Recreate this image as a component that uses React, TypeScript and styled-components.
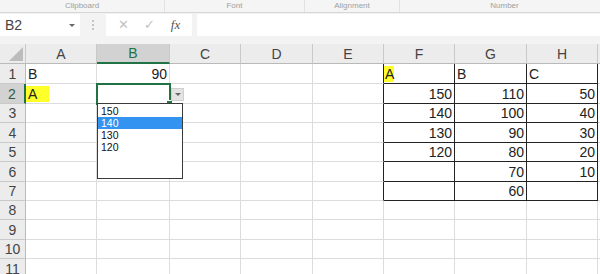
import styled, { createGlobalStyle } from 'styled-components';

const GlobalStyle = createGlobalStyle`
  html, body {
    margin: 0;
    padding: 0;
    overflow: hidden;
    background: #f3f3f3;
    font-family: 'Liberation Sans', Arial, sans-serif;
  }
`;

const colors = {
  grid: '#dcdcdc',
  headerBg: '#ececec',
  headerLine: '#c9c9c9',
  headerSel: '#d2d2d2',
  green: '#217346',
  text: '#222',
  black: '#222'
};

const COL_WIDTHS = [71, 73, 71, 72, 71, 71, 72, 71];
const COL_NAMES = ['A', 'B', 'C', 'D', 'E', 'F', 'G', 'H'];
const ROW_HEIGHTS = [20, 20, 19, 20, 19, 20, 19, 19, 20, 19, 20];

type CellValue = { text: string; align?: 'left' | 'right'; mark?: 'wide' | 'tight' };

// sheet contents keyed by "row-col" (col index 0 = A)
const data: Record<string, CellValue> = {
  '1-0': { text: 'B' },
  '1-1': { text: '90', align: 'right' },
  '2-0': { text: 'A', mark: 'wide' },
  '1-5': { text: 'A', mark: 'tight' },
  '1-6': { text: 'B' },
  '1-7': { text: 'C' },
  '2-5': { text: '150', align: 'right' },
  '3-5': { text: '140', align: 'right' },
  '4-5': { text: '130', align: 'right' },
  '5-5': { text: '120', align: 'right' },
  '2-6': { text: '110', align: 'right' },
  '3-6': { text: '100', align: 'right' },
  '4-6': { text: '90', align: 'right' },
  '5-6': { text: '80', align: 'right' },
  '6-6': { text: '70', align: 'right' },
  '7-6': { text: '60', align: 'right' },
  '2-7': { text: '50', align: 'right' },
  '3-7': { text: '40', align: 'right' },
  '4-7': { text: '30', align: 'right' },
  '5-7': { text: '20', align: 'right' },
  '6-7': { text: '10', align: 'right' }
};

const boxed = (r: number, c: number) => r >= 1 && r <= 7 && c >= 5 && c <= 7;

const Window = styled.div`
  width: 600px;
  height: 274px;
  display: flex;
  flex-direction: column;
  background: #f3f3f3;
  overflow: hidden;
  & > * {
    flex-shrink: 0;
  }
`;

const RibbonStrip = styled.div`
  height: 12px;
  border-bottom: 1px solid #d6d6d6;
  display: flex;
  overflow: hidden;
  background: #f5f5f5;
`;

const RibbonLabel = styled.span<{ $w: number }>`
  width: ${p => p.$w}px;
  flex: none;
  text-align: center;
  font-size: 8px;
  line-height: 11px;
  color: #a0a0a0;
  border-right: 1px solid #e2e2e2;
  box-sizing: border-box;
`;

const FormulaBar = styled.div`
  height: 22px;
  margin-top: 1px;
  display: flex;
  align-items: stretch;
`;

const NameBox = styled.div`
  width: 80px;
  background: #fff;
  display: flex;
  align-items: center;
  justify-content: space-between;
  padding: 0 5px;
  box-sizing: border-box;
  font-size: 14px;
  color: #444;
`;

const SmallArrow = styled.span`
  width: 0;
  height: 0;
  border-left: 3px solid transparent;
  border-right: 3px solid transparent;
  border-top: 3px solid #666;
`;

const Grip = styled.div`
  width: 26px;
  display: flex;
  flex-direction: column;
  align-items: center;
  justify-content: center;
  gap: 2px;
  & > span {
    width: 2px;
    height: 2px;
    background: #c4c4c4;
  }
`;

const ButtonsBox = styled.div`
  width: 86px;
  background: #fff;
  display: flex;
  align-items: center;
  justify-content: space-around;
  padding: 0 4px;
  box-sizing: border-box;
`;

const BarIcon = styled.span<{ $dark?: boolean }>`
  font-size: 13px;
  color: ${p => (p.$dark ? '#555' : '#c2c2c2')};
  font-family: 'Liberation Serif', serif;
  font-style: ${p => (p.$dark ? 'italic' : 'normal')};
`;

const FormulaInput = styled.div`
  flex: 1;
  margin-left: 5px;
  background: #fff;
`;

const Sheet = styled.div`
  position: relative;
  margin-top: 8px;
  display: grid;
  grid-template-columns: 26px ${COL_WIDTHS.map(w => `${w}px`).join(' ')} 1fr;
  grid-template-rows: 20px ${ROW_HEIGHTS.map(h => `${h}px`).join(' ')};
  background: #fff;
`;

const Corner = styled.div`
  background: ${colors.headerBg};
  border-right: 1px solid ${colors.headerLine};
  border-bottom: 1px solid #b9b9b9;
  position: relative;
  &::after {
    content: '';
    position: absolute;
    right: 2px;
    bottom: 2px;
    border-left: 14px solid transparent;
    border-bottom: 14px solid #bcbcbc;
  }
`;

const ColHeader = styled.div<{ $sel?: boolean }>`
  background: ${p => (p.$sel ? colors.headerSel : colors.headerBg)};
  color: ${p => (p.$sel ? colors.green : '#444')};
  border-right: 1px solid ${colors.headerLine};
  border-bottom: ${p => (p.$sel ? `2px solid ${colors.green}` : '1px solid #b9b9b9')};
  box-sizing: border-box;
  display: flex;
  align-items: flex-end;
  justify-content: center;
  font-size: 14px;
  padding-bottom: 1px;
`;

const RowHeader = styled.div<{ $sel?: boolean }>`
  background: ${p => (p.$sel ? colors.headerSel : colors.headerBg)};
  color: ${p => (p.$sel ? '#2f5a3e' : '#444')};
  border-right: ${p => (p.$sel ? `2px solid ${colors.green}` : `1px solid #b9b9b9`)};
  border-bottom: 1px solid ${colors.headerLine};
  box-sizing: border-box;
  display: flex;
  align-items: center;
  justify-content: center;
  font-size: 14px;
`;

const Cell = styled.div<{ $right: string; $bottom: string; $align: string }>`
  border-right: 1px solid ${p => p.$right};
  border-bottom: 1px solid ${p => p.$bottom};
  box-sizing: border-box;
  display: flex;
  align-items: flex-end;
  justify-content: ${p => (p.$align === 'right' ? 'flex-end' : 'flex-start')};
  padding: 0 2px 1px 2px;
  font-size: 14px;
  line-height: 16px;
  color: ${colors.text};
  overflow: visible;
  white-space: nowrap;
`;

const Marked = styled.span<{ $wide: boolean }>`
  background: #ffff2a;
  padding-right: ${p => (p.$wide ? 12 : 0)}px;
  margin-left: -2px;
  padding-left: ${p => (p.$wide ? 2 : 1)}px;
`;

const Selection = styled.div`
  position: absolute;
  left: 96px;
  top: 39px;
  width: 75px;
  height: 22px;
  border: 2px solid ${colors.green};
  box-sizing: border-box;
  &::after {
    content: '';
    position: absolute;
    right: -4px;
    bottom: -4px;
    width: 5px;
    height: 5px;
    background: ${colors.green};
    border: 1px solid #fff;
  }
`;

const DropButton = styled.div`
  position: absolute;
  left: 171px;
  top: 44px;
  width: 13px;
  height: 13px;
  background: #e3e3e3;
  border: 1px solid #cfcfcf;
  box-sizing: border-box;
  display: flex;
  align-items: center;
  justify-content: center;
`;

const ListBox = styled.div`
  position: absolute;
  left: 97px;
  top: 59px;
  width: 86px;
  height: 76px;
  background: #fff;
  border: 1px solid #3a3a3a;
  box-sizing: border-box;
  padding-top: 1px;
  display: flex;
  flex-direction: column;
`;

const ListItem = styled.div<{ $active?: boolean }>`
  height: 12px;
  line-height: 12px;
  font-size: 10.5px;
  padding-left: 3px;
  color: ${p => (p.$active ? '#fff' : '#111')};
  background: ${p => (p.$active ? '#3393f0' : 'transparent')};
`;

export default function App() {
  const cells = [];
  for (let r = 1; r <= ROW_HEIGHTS.length; r++) {
    cells.push(
      <RowHeader key={`rh-${r}`} $sel={r === 2}>
        {r}
      </RowHeader>
    );
    for (let c = 0; c <= COL_WIDTHS.length; c++) {
      const v = data[`${r}-${c}`];
      const right = boxed(r, c) || boxed(r, c + 1) ? colors.black : colors.grid;
      const bottom = boxed(r, c) || boxed(r + 1, c) ? colors.black : colors.grid;
      cells.push(
        <Cell key={`${r}-${c}`} $right={right} $bottom={bottom} $align={v?.align ?? 'left'}>
          {v && (v.mark ? <Marked $wide={v.mark === 'wide'}>{v.text}</Marked> : v.text)}
        </Cell>
      );
    }
  }

  return (
    <>
      <GlobalStyle />
      <Window>
        <RibbonStrip>
          <RibbonLabel $w={165}>Clipboard</RibbonLabel>
          <RibbonLabel $w={140}>Font</RibbonLabel>
          <RibbonLabel $w={95}>Alignment</RibbonLabel>
          <RibbonLabel $w={210}>Number</RibbonLabel>
        </RibbonStrip>
        <FormulaBar>
          <NameBox>
            B2
            <SmallArrow />
          </NameBox>
          <Grip>
            <span />
            <span />
            <span />
          </Grip>
          <ButtonsBox>
            <BarIcon>✕</BarIcon>
            <BarIcon>✓</BarIcon>
            <BarIcon $dark>fx</BarIcon>
          </ButtonsBox>
          <FormulaInput />
        </FormulaBar>
        <Sheet>
          <Corner />
          {COL_NAMES.map((n, i) => (
            <ColHeader key={n} $sel={i === 1}>
              {n}
            </ColHeader>
          ))}
          <ColHeader />
          {cells}
          <Selection />
          <DropButton>
            <SmallArrow />
          </DropButton>
          <ListBox>
            <ListItem>150</ListItem>
            <ListItem $active>140</ListItem>
            <ListItem>130</ListItem>
            <ListItem>120</ListItem>
          </ListBox>
        </Sheet>
      </Window>
    </>
  );
}
